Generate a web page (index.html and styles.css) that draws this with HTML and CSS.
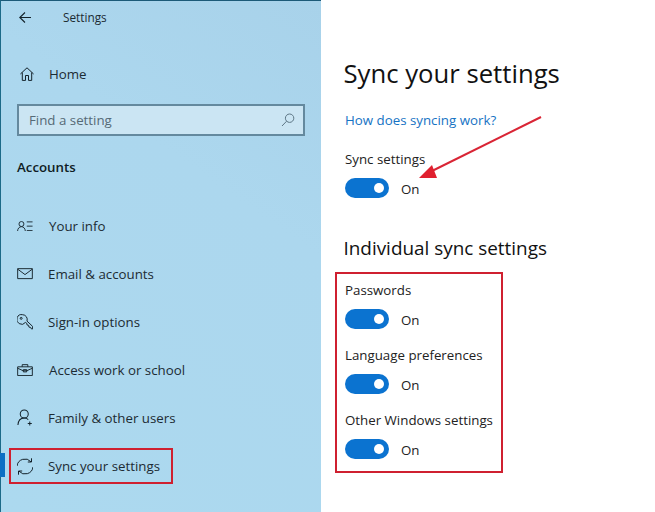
FILE: index.html
```html
<!DOCTYPE html>
<html lang="en">
<head>
<meta charset="utf-8">
<title>Settings</title>
<link rel="stylesheet" href="styles.css">
</head>
<body>
<div class="app">
  <aside class="sidebar">
    <header class="titlebar">
      <svg class="back" viewBox="0 0 12 11" width="12" height="11"><path d="M6 .5 .8 5.500 6 10.500M.8 5.500H12"/></svg>
      <span class="apptitle">Settings</span>
    </header>
    <div class="home">
      <svg class="ico" viewBox="0 0 14 14" width="14" height="14"><path d="M.4 7 7 .8 13.600 7M2.300 5.500V13.400H5.500V8.500H8.500V13.400H11.700V5.500"/></svg>
      <span>Home</span>
    </div>
    <div class="search">
      <span>Find a setting</span>
      <svg class="ico" viewBox="0 0 14 14" width="14" height="14"><circle cx="8.600" cy="5.200" r="4.200"/><path d="M5.600 8.200 1 13"/></svg>
    </div>
    <h2 class="group">Accounts</h2>
    <nav class="nav">
      <a class="item shift"><svg class="ico" viewBox="0 0 18 12" width="18" height="12"><circle cx="5" cy="3.400" r="2.800"/><path d="M.6 11.500C.8 8.400 2.600 6.400 5 6.400s4.200 2 4.400 5.100M11 1h6.500M11 5.800h6.500M11 10.800h6.500"/></svg><span>Your info</span></a>
      <a class="item"><svg class="ico" viewBox="0 0 17 12" width="17" height="12"><path d="M.7.700h15.600v10.600H.7zM.7 1.200 8.500 7l7.800-5.800"/></svg><span>Email &amp; accounts</span></a>
      <a class="item"><svg class="ico" viewBox="0 0 16.500 16.500" width="16" height="16"><path d="M5.800.700a5 5 0 1 0 2.900 8l1.300.800.500 1.900 1.500.3.300 1.800 1.800.4.800 1.500h1.200v-2.600L10.300 7.300A5 5 0 0 0 5.800.700z"/><circle cx="4.300" cy="4.500" r="1"/></svg><span>Sign-in options</span></a>
      <a class="item shift"><svg class="ico" viewBox="0 0 17 13" width="17" height="13"><path d="M.7 3h15.600v9.300H.7zM5.500 3V.7h6V3M.7 4.500l6 2.700h3.600l6-2.700"/><path d="M6.700 6h3.600v2.400H6.700z"/></svg><span>Access work or school</span></a>
      <a class="item"><svg class="ico" viewBox="0 0 15.500 17" width="15" height="16"><circle cx="7" cy="5" r="4"/><path d="M.7 16C1 11.500 3.500 9 7 9c1.600 0 3 .5 4 1.500M12.500 12.500v4M10.500 14.500h4"/></svg><span>Family &amp; other users</span></a>
      <a class="item current"><svg class="ico" viewBox="1 0.500 16 17" width="16" height="17"><path d="M1 8.500A8 8 0 0 1 15 4.300M15.500.8v3.700h-3.700M17 9.500A8 8 0 0 1 3 13.700M2.500 17.200v-3.700h3.700"/></svg><span>Sync your settings</span></a>
    </nav>
  </aside>
  <main class="content">
    <h1 class="title">Sync your settings</h1>
    <a class="link">How does syncing work?</a>
    <section class="setting first">
      <div class="label">Sync settings</div>
      <div class="toggle"><span class="switch"><span class="knob"></span></span><span class="state">On</span></div>
    </section>
    <h2 class="subtitle">Individual sync settings</h2>
    <section class="setting">
      <div class="label">Passwords</div>
      <div class="toggle"><span class="switch"><span class="knob"></span></span><span class="state">On</span></div>
    </section>
    <section class="setting">
      <div class="label">Language preferences</div>
      <div class="toggle"><span class="switch"><span class="knob"></span></span><span class="state">On</span></div>
    </section>
    <section class="setting">
      <div class="label">Other Windows settings</div>
      <div class="toggle"><span class="switch"><span class="knob"></span></span><span class="state">On</span></div>
    </section>
  </main>
</div>
<div class="mark mark-nav"></div>
<div class="mark mark-group"></div>
<svg class="arrow" viewBox="0 0 140 70" width="140" height="70"><path class="shaft" d="M129 4 20 58"/><path class="head" d="M20 52 7 65H25z"/></svg>
</body>
</html>
```
FILE: styles.css
```css
* { box-sizing: border-box; }
html, body { margin: 0; height: 100%; overflow: hidden; }
body { font-family: "Open Sans", "Noto Sans", sans-serif; font-size: 13.3px; color: #222; background: #fff; position: relative; }
.app { display: flex; height: 512px; }
.sidebar { width: 321px; flex: none; background: linear-gradient(215deg, #a8d2ea 0%, #acd7ee 35%, #acd9ef 100%); border-left: 1px solid #1c6a88; padding-left: 1px; border-top: 1px solid #1c5a78; display: flex; flex-direction: column; color: #1c2b33; }
.ico, .back { fill: none; stroke: #14222a; stroke-width: 1; flex: none; }
.titlebar { height: 32px; display: flex; align-items: center; padding-left: 17px; }
.back { margin-right: 32px; stroke-width: 1.1; }
.apptitle { font-size: 11.8px; }
.home { height: 34px; margin-top: 24px; display: flex; align-items: center; padding-left: 18px; gap: 15px; }
.search { margin: 13px 16px 0 15px; height: 32px; border: 2px solid #64899e; background: #cbe5f3; display: flex; align-items: center; justify-content: space-between; padding: 0 8px 0 10px; color: #566a76; }
.search .ico { stroke: #5d7685; }
.group { margin: 19px 0 0 15px; height: 24px; line-height: 24px; font-size: 13.3px; font-weight: 600; color: #0f1c24; }
.nav { margin-top: 23px; display: flex; flex-direction: column; }
.item { height: 48px; display: flex; align-items: center; padding-left: 15px; position: relative; }
.item .ico { width: 31px; padding-right: 15px; height: auto; }
.item.shift span { margin-left: 1px; }
.current::before { content: ""; position: absolute; left: -2px; top: 11px; width: 5px; height: 24px; background: #0b6fc4; }
.content { flex: 1; padding: 0 0 0 23px; }
.title { margin: 53px 0 0 -0.5px; height: 42px; line-height: 42px; font-size: 25.700px; font-weight: 400; color: #111; }
.link { display: block; margin: 15px 0 0 1px; height: 20px; line-height: 20px; color: #1673c4; }
.setting { margin-left: 1px; }
.setting.first { margin-top: 19px; }
.label { height: 20px; line-height: 20px; }
.toggle { display: flex; align-items: center; gap: 12px; margin-top: 9px; height: 20px; }
.state { padding-top: 2px; }
.switch { width: 44px; height: 20px; border-radius: 10px; background: #0b73d0; position: relative; display: block; }
.knob { position: absolute; right: 5px; top: 5px; width: 10px; height: 10px; border-radius: 50%; background: #fff; }
.subtitle { margin: 37px 0 19px -0.5px; height: 26px; line-height: 26px; font-size: 18.900px; font-weight: 400; color: #111; }
.setting + .setting { margin-top: 16px; }
.mark { position: absolute; border: 2px solid #cf2030; }
.mark-nav { left: 9px; top: 448px; width: 164px; height: 36px; }
.mark-group { left: 335px; top: 272px; width: 168px; height: 201px; }
.arrow { position: absolute; left: 412px; top: 113px; overflow: visible; }
.shaft { stroke: #d92535; stroke-width: 2; fill: none; }
.head { fill: #e0202f; }
```
